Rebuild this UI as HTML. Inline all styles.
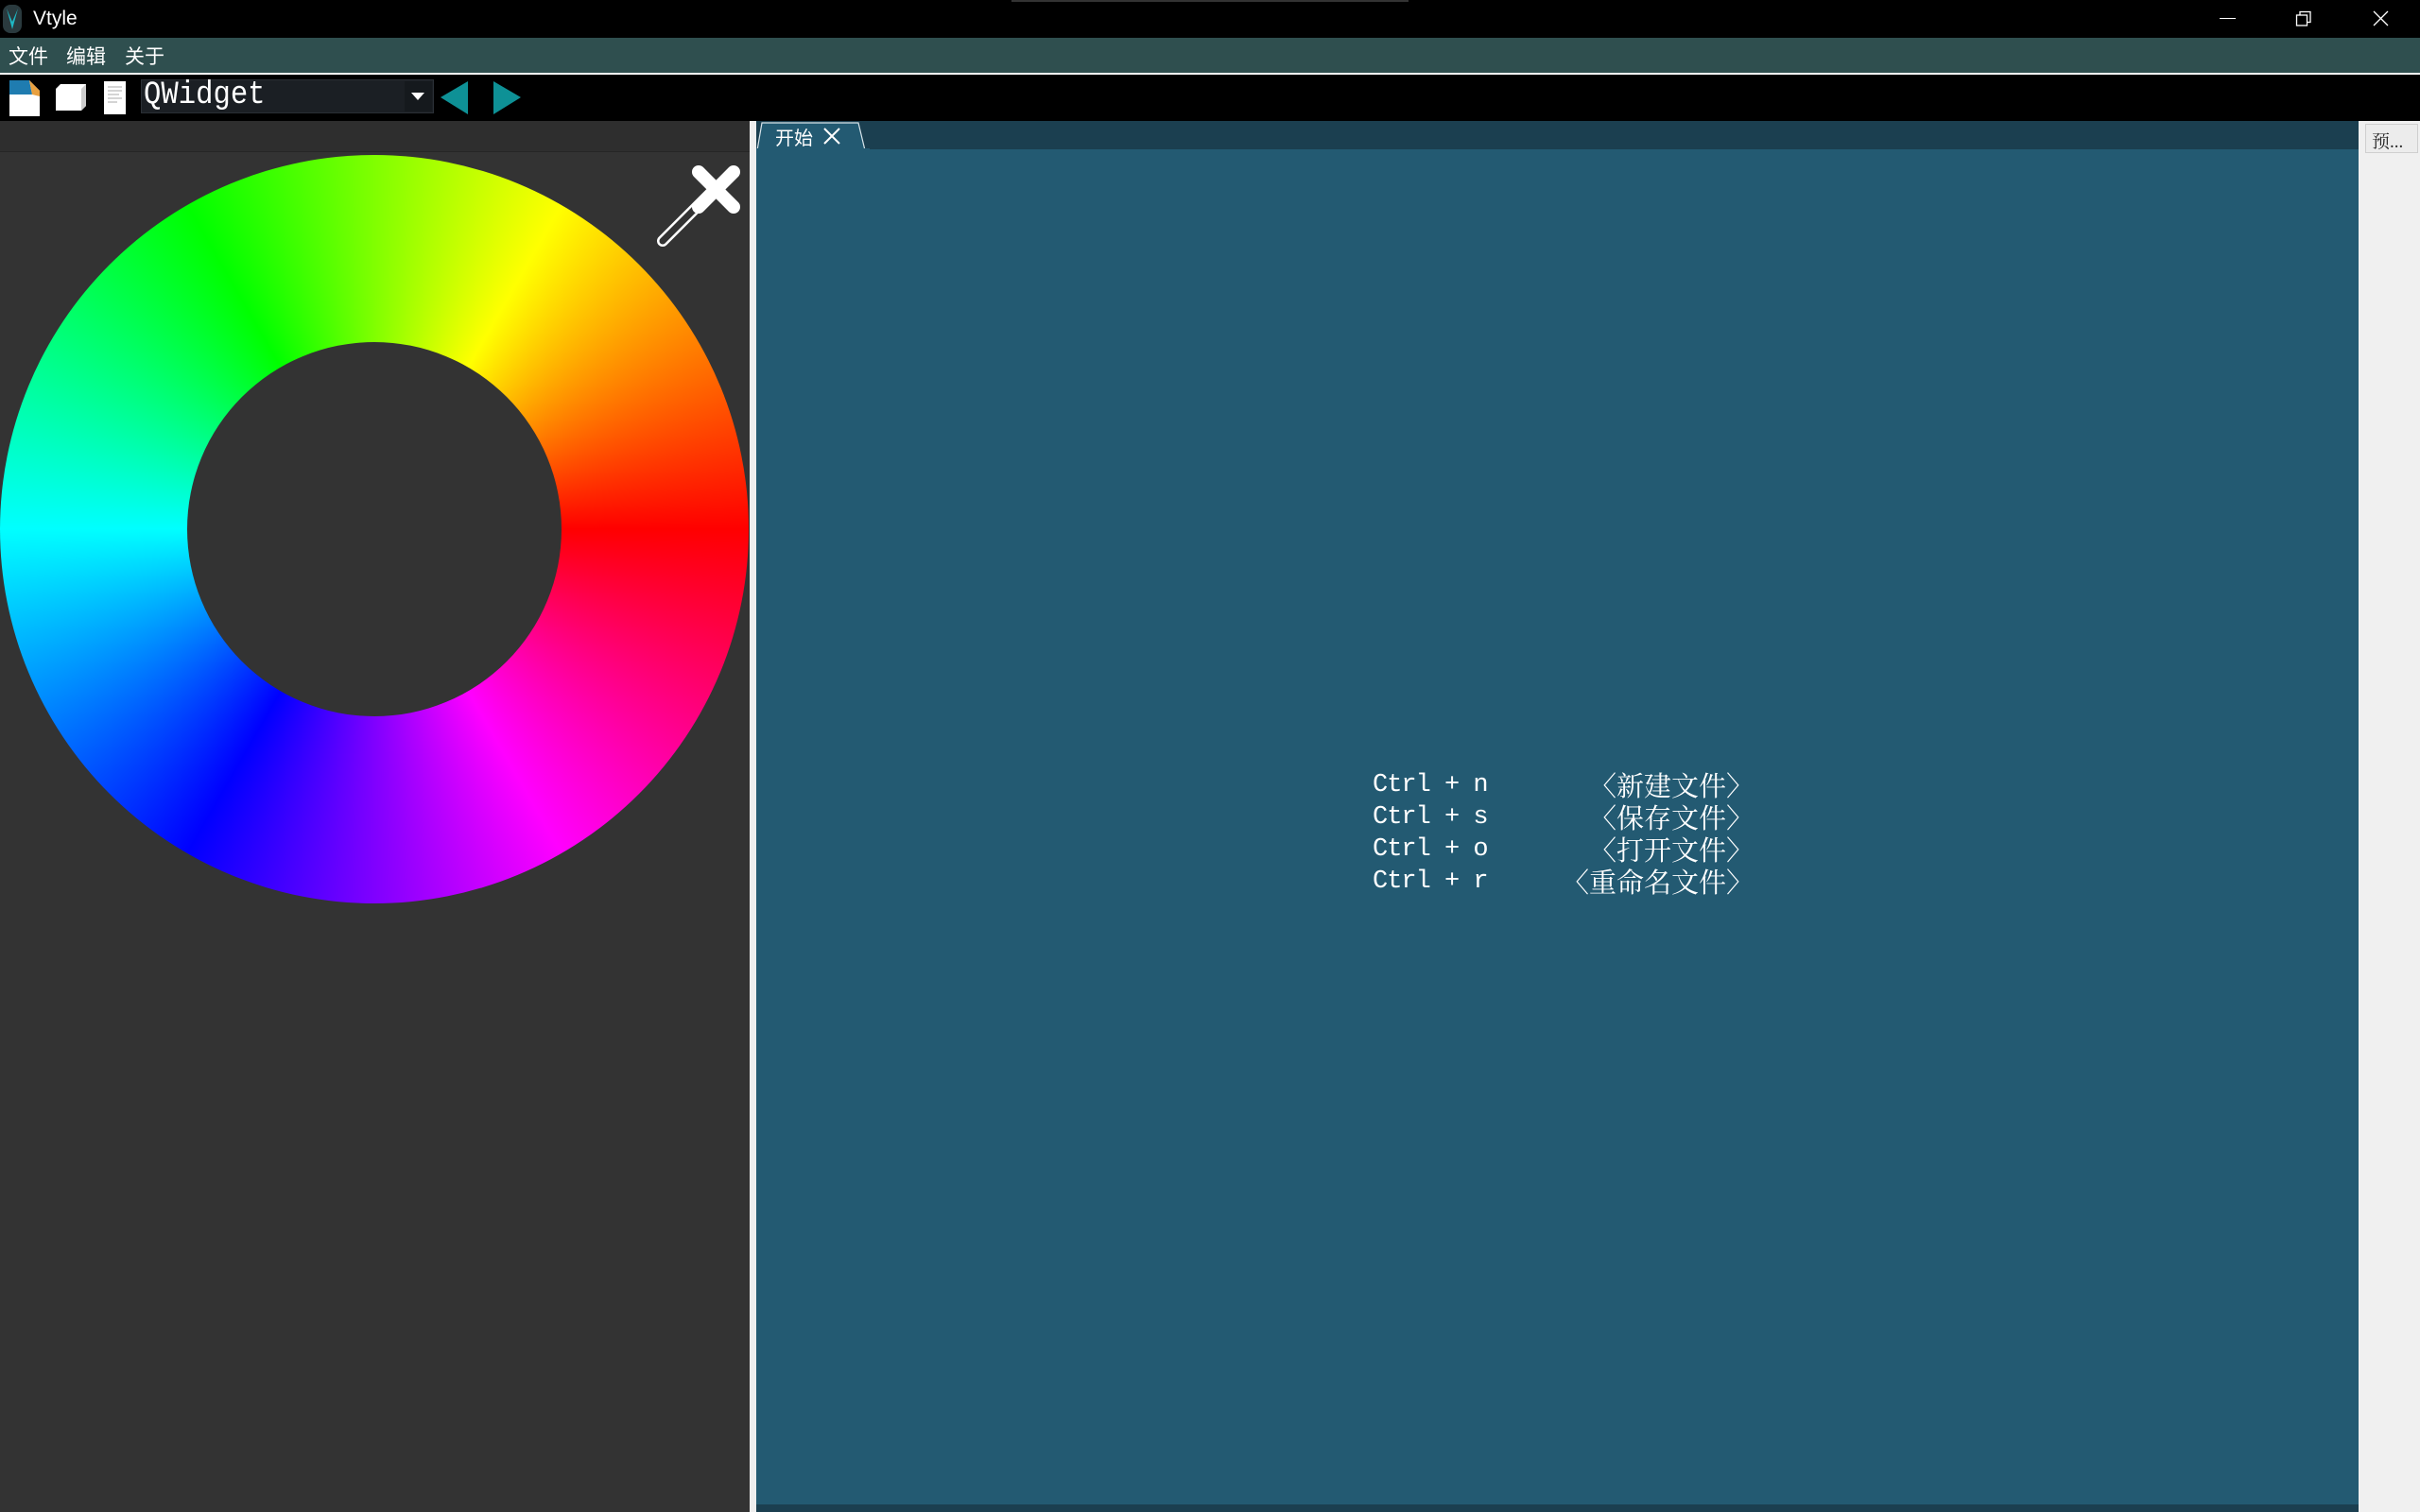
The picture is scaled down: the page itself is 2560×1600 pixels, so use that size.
<!DOCTYPE html>
<html><head><meta charset="utf-8"><style>
*{margin:0;padding:0;box-sizing:border-box}
body{width:2560px;height:1600px;overflow:hidden;background:#000;font-family:"Liberation Sans","Noto Sans CJK SC",sans-serif;position:relative}
.abs{position:absolute}
</style></head><body>
<!-- title bar -->
<div class="abs" style="left:0;top:0;width:2560px;height:40px;background:#000"></div>
<svg class="abs" style="left:3px;top:5px" width="20" height="30" viewBox="0 0 20 30"><rect x="0" y="0" width="20" height="30" rx="8" fill="#2a3a3e"/><path d="M4 4 L10 26 L16 4 L10 18 Z" fill="#1fb7c4"/></svg>
<div class="abs" style="left:35px;top:8px;color:#fff;font-size:21px">Vtyle</div>
<div class="abs" style="left:1070px;top:0;width:420px;height:2px;background:#333"></div>
<div class="abs" style="left:2348px;top:19px;width:17px;height:1px;background:#fff"></div>
<svg class="abs" style="left:2428px;top:11px" width="18" height="18"><rect x="5" y="1.5" width="11" height="11" fill="none" stroke="#fff" stroke-width="1.3"/><rect x="1.5" y="5" width="11" height="11" fill="#000" stroke="#fff" stroke-width="1.3"/></svg>
<svg class="abs" style="left:2510px;top:11px" width="17" height="17"><path d="M1 1L16 16M16 1L1 16" stroke="#fff" stroke-width="1.3"/></svg>
<!-- menu -->
<div class="abs" style="left:0;top:40px;width:2560px;height:37px;background:#2f4f4f"></div>
<div class="abs" style="left:0;top:77px;width:2560px;height:2px;background:#fff"></div>
<div class="abs" style="left:9px;top:44px;color:#fff;font-size:21px">文件</div>
<div class="abs" style="left:70px;top:44px;color:#fff;font-size:21px">编辑</div>
<div class="abs" style="left:132px;top:44px;color:#fff;font-size:21px">关于</div>
<!-- toolbar -->
<svg class="abs" style="left:9px;top:84px" width="34" height="40" viewBox="0 0 34 40"><path d="M1 1 L22 1 L33 12 L33 39 L1 39 Z" fill="#fff"/><path d="M1 1 L22 1 L25 16 L1 16 Z" fill="#1f7cb0"/><path d="M22 1 L33 12 L33 18 L25 16Z" fill="#e8a040"/></svg>
<svg class="abs" style="left:58px;top:88px" width="34" height="30" viewBox="0 0 34 30"><path d="M6 1 L33 1 L33 24 L28 29 L1 29 L1 6 Z" fill="#fff"/><path d="M28 6 L33 1 L33 24 L28 29Z" fill="#ccc"/></svg>
<svg class="abs" style="left:110px;top:86px" width="24" height="36"><rect x="0" y="0" width="23" height="35" fill="#fff"/><path d="M4 6H19M4 10H19M4 14H16M4 18H19M4 22H14" stroke="#aaa" stroke-width="1"/></svg>
<div class="abs" style="left:149px;top:84px;width:310px;height:36px;background:#1b1f24;border:1px solid #2a2f35"></div>
<div class="abs" style="left:152px;top:82px;color:#fff;font-family:'Liberation Mono',monospace;font-size:34px;transform:scaleX(0.9);transform-origin:left">QWidget</div>
<div class="abs" style="left:428px;top:86px;width:29px;height:32px;background:#15191d"></div>
<svg class="abs" style="left:434px;top:97px" width="16" height="10"><path d="M1 1H15L8 9Z" fill="#fff"/></svg>
<svg class="abs" style="left:465px;top:85px" width="31" height="37"><path d="M30 1 L1 18 L30 36Z" fill="#0e9196"/></svg>
<svg class="abs" style="left:521px;top:85px" width="31" height="37"><path d="M1 1 L30 18 L1 36Z" fill="#0e9196"/></svg>
<!-- left panel -->
<div class="abs" style="left:0;top:128px;width:793px;height:1472px;background:#333"></div>
<div class="abs" style="left:0;top:128px;width:793px;height:33px;background:#2e2e2e;border-bottom:1px solid #262626"></div>
<div class="abs" style="left:0;top:164px;width:792px;height:792px;border-radius:50%;background:conic-gradient(#80ff00 0deg,#ffff00 30deg,#ff0000 90deg,#ff00ff 150deg,#0000ff 210deg,#00ffff 270deg,#00ff00 330deg,#80ff00 360deg)"></div>
<div class="abs" style="left:198px;top:362px;width:396px;height:396px;border-radius:50%;background:#333"></div>
<svg class="abs" style="left:690px;top:165px" width="100" height="100"><path d="M11 90 L62 39" stroke="#fff" stroke-width="12" stroke-linecap="round"/><path d="M11 90 L62 39" stroke="#333" stroke-width="7" stroke-linecap="round"/><path d="M49 17 L86 54 M86 17 L49 54" stroke="#fff" stroke-width="14" stroke-linecap="round"/></svg>
<div class="abs" style="left:793px;top:128px;width:7px;height:1472px;background:#eee"></div>
<!-- center -->
<div class="abs" style="left:800px;top:128px;width:1695px;height:1472px;background:#235a72"></div>
<div class="abs" style="left:800px;top:128px;width:1695px;height:30px;background:#1b3f50"></div>
<svg class="abs" style="left:800px;top:129px" width="120" height="30"><path d="M1 30 L6 1 L108 1 L115 30Z" fill="#235a72" stroke="#d8e4ea" stroke-width="1.2"/><rect x="0" y="28" width="120" height="3" fill="#235a72"/></svg>
<div class="abs" style="left:820px;top:130px;color:#fff;font-size:20px">开始</div>
<svg class="abs" style="left:870px;top:134px" width="20" height="20"><path d="M2 2L18 18M18 2L2 18" stroke="#fff" stroke-width="2"/></svg>
<div class="abs" style="left:800px;top:1592px;width:1695px;height:8px;background:#1b3f50"></div>
<div class="abs" style="left:1452px;top:814px;color:#fff;font-family:'Liberation Mono',monospace;font-size:27px;letter-spacing:-1px;line-height:34px;white-space:pre">Ctrl + n
Ctrl + s
Ctrl + o
Ctrl + r</div>
<div class="abs" style="left:1555px;top:816px;width:300px;text-align:right;color:#fff;font-family:'Liberation Serif','Noto Serif CJK SC',serif;font-size:29px;line-height:34px">〈新建文件〉<br>〈保存文件〉<br>〈打开文件〉<br>〈重命名文件〉</div>
<!-- right panel -->
<div class="abs" style="left:2495px;top:128px;width:65px;height:1472px;background:#f0f0f0"></div>
<div class="abs" style="left:2502px;top:131px;width:56px;height:31px;background:#ececec;border:1px solid #cfcfcf;color:#222;font-size:19px;padding:3px 0 0 6px;font-family:'Liberation Serif','Noto Serif CJK SC',serif">预...</div>
</body></html>
